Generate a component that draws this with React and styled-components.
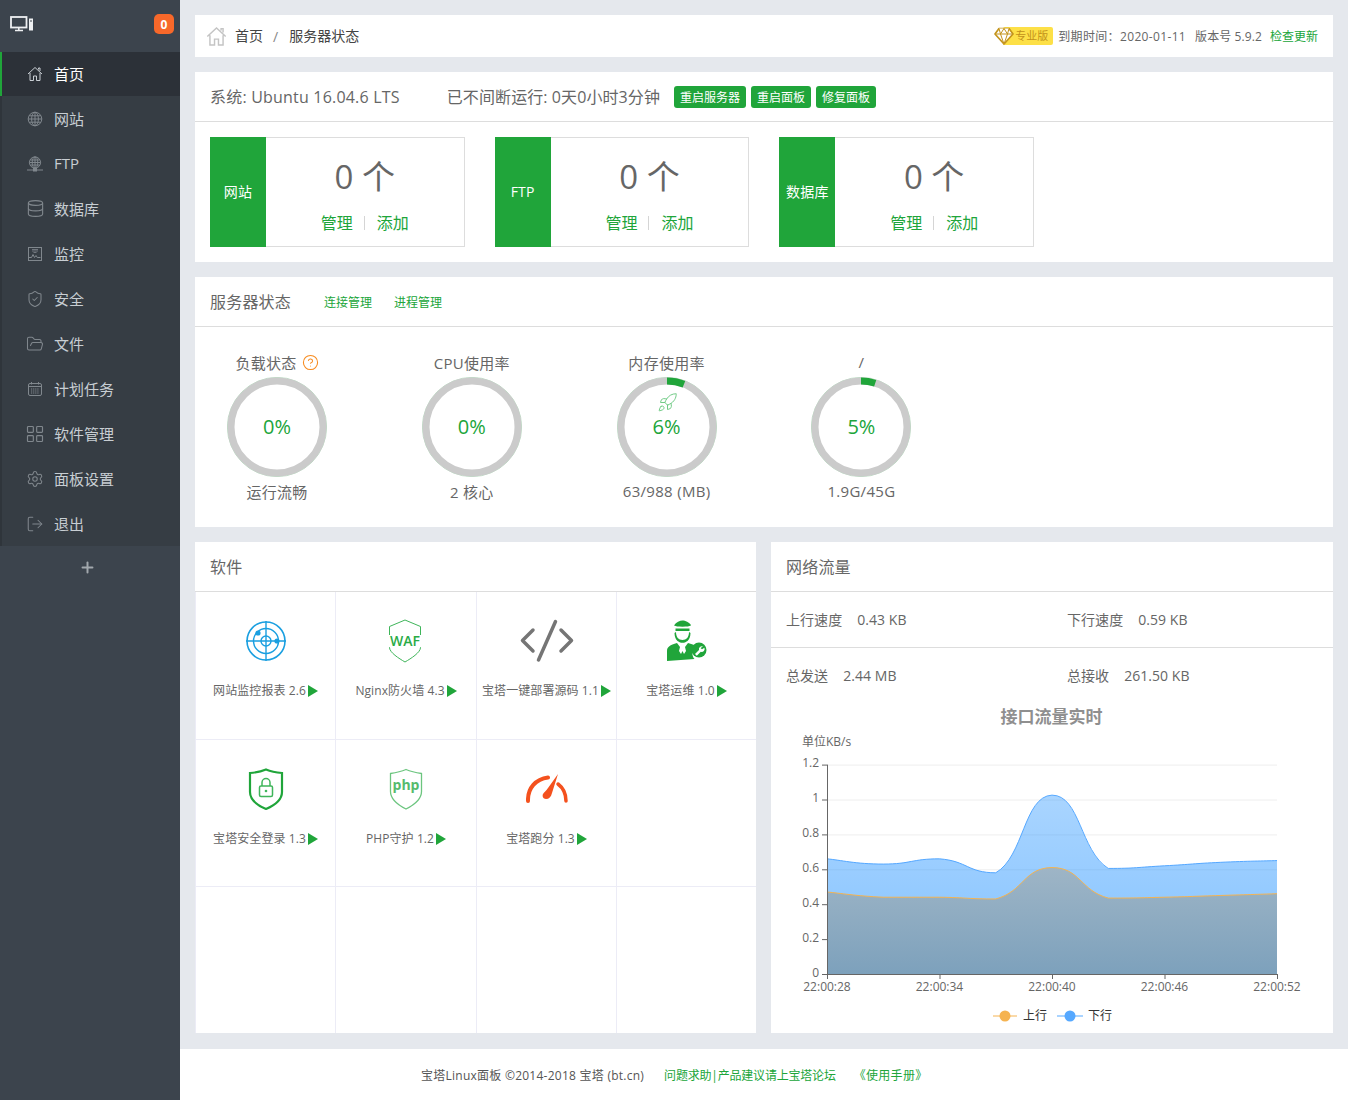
import React from "react";
import styled, { createGlobalStyle } from "styled-components";
import { Database, ShieldCheck, FolderOpen, LayoutGrid, Settings, LogOut, Plus, CircleHelp, Rocket } from "lucide-react";

const GREEN = "#20a53a";

const Global = createGlobalStyle`
  * { box-sizing: border-box; }
  html, body { margin: 0; padding: 0; }
  body {
    background: #e5e8ed;
    font-family: "Open Sans", "Noto Sans CJK SC", sans-serif;
    color: #666;
    font-size: 14px;
  }
`;

const Page = styled.div`
  display: flex;
  width: 100%;
  min-height: 1100px;
`;

const Sidebar = styled.aside`
  width: 180px;
  flex: none;
  background: #3c444d;
  display: flex;
  flex-direction: column;
`;
const Brand = styled.div`
  height: 52px;
  display: flex;
  align-items: center;
  justify-content: space-between;
  padding: 0 6px 4px 10px;
`;
const Badge = styled.span`
  width: 20px;
  height: 20px;
  border-radius: 5px;
  background: #f7682a;
  color: #fff;
  font-size: 12px;
  font-weight: 700;
  display: flex;
  align-items: center;
  justify-content: center;
`;
const Menu = styled.nav`
  background: #363d44;
  border-left: 2px solid #2f353b;
`;
const MenuItem = styled.a`
  height: 45px;
  display: flex;
  align-items: center;
  gap: 11px;
  margin-left: -2px;
  padding: 0 0 0 25px;
  font-size: 15px;
  color: ${p => (p.$active ? "#fff" : "#c8ced3")};
  background: ${p => (p.$active ? "#2c3138" : "transparent")};
  border-left: 2px solid ${p => (p.$active ? GREEN : "transparent")};
  & > span:last-child { margin-top: -1px; }
  &:first-child { height: 44px; }
  &:first-child > span:last-child { margin-top: -2px; }
`;
const MenuIcon = styled.span`
  width: 16px;
  height: 20px;
  flex: none;
  display: flex;
  align-items: center;
  justify-content: center;
  & > svg { flex: none; }
`;
const AddRow = styled.div`
  height: 44px;
  display: flex;
  align-items: center;
  justify-content: center;
  color: #a2a8ad;
  padding-bottom: 2px;
  & > svg { margin-left: -6px; }
`;

const Main = styled.main`
  flex: 1;
  min-width: 0;
  display: flex;
  flex-direction: column;
`;
const Content = styled.div`
  flex: 1;
  padding: 15px 15px 16px;
  display: flex;
  flex-direction: column;
  gap: 15px;
`;
const Card = styled.section`
  background: #fff;
`;
const Crumbs = styled(Card)`
  height: 42px;
  display: flex;
  align-items: center;
  padding: 0 15px 0 11px;
  color: #444;
  font-size: 14px;
`;
const CrumbText = styled.span`
  margin-top: -2px;
`;
const CrumbSep = styled.span`
  color: #888;
  margin: 0 11px 0 10px;
`;
const CrumbHome = styled.span`
  display: flex;
  margin-right: 8px;
`;
const CrumbMeta = styled.div`
  margin-left: auto;
  display: flex;
  align-items: center;
  font-size: 12px;
  color: #666;
`;
const ProTag = styled.span`
  background: #fde047;
  color: #c2911a;
  height: 18px;
  line-height: 18px;
  padding: 0 5px 0 12px;
  border-radius: 2px;
  margin-left: -11px;
  margin-right: 5px;
  font-size: 11px;
`;
const GemWrap = styled.span`
  display: flex;
  position: relative;
  z-index: 1;
`;
const MetaText = styled.span`
  margin-right: ${p => p.$mr || 0}px;
  letter-spacing: ${p => p.$ls || 0}px;
`;
const Link = styled.a`
  color: ${GREEN};
  font-size: ${p => p.$size || 12}px;
  margin-left: ${p => p.$ml || 0}px;
  letter-spacing: ${p => p.$ls || 0}px;
`;
const CardHead = styled.div`
  height: ${p => p.$h || 50}px;
  border-bottom: 1px solid #ddd;
  padding: 0 15px;
  display: flex;
  align-items: center;
  font-size: 16px;
  color: #666;
`;
const HeadText = styled.span`
  margin-top: -2px;
  letter-spacing: ${p => p.$ls ?? 0.2}px;
  margin-left: ${p => p.$ml || 0}px;
  margin-right: ${p => p.$mr || 0}px;
`;
const Btn = styled.button`
  height: 22px;
  padding: 0 6px;
  border: 0;
  border-radius: 3px;
  background: ${GREEN};
  color: #fff;
  font: inherit;
  font-size: 12px;
  margin-right: 5px;
`;
const Stats = styled.div`
  display: grid;
  grid-template-columns: repeat(3, 254.67px);
  column-gap: 30px;
  padding: 15px;
`;
const Stat = styled.div`
  height: 110px;
  display: flex;
  border: 1px solid #ddd;
`;
const StatLabel = styled.div`
  width: 56px;
  margin: -1px 0 -1px -1px;
  padding-bottom: 2px;
  background: ${GREEN};
  color: #fff;
  font-size: 14px;
  letter-spacing: 0.2px;
  display: flex;
  align-items: center;
  justify-content: center;
`;
const StatBody = styled.div`
  flex: 1;
  display: flex;
  flex-direction: column;
  align-items: center;
`;
const StatNum = styled.div`
  font-size: 33px;
  line-height: 44px;
  margin-top: 17px;
  color: #666;
`;
const StatLinks = styled.div`
  display: flex;
  align-items: center;
  margin-top: 13px;
  font-size: 16px;
  line-height: 22px;
`;
const StatSep = styled.i`
  width: 1px;
  height: 14px;
  background: #d5d5d5;
  margin: 0 12px 0 11px;
`;
const Gauges = styled.div`
  display: grid;
  grid-template-columns: repeat(4, 164px);
  column-gap: 30.8px;
  padding: 26px 0 25px;
  font-size: 15px;
  letter-spacing: 0.3px;
`;
const Gauge = styled.div`
  display: flex;
  flex-direction: column;
  align-items: center;
`;
const GaugeTitle = styled.div`
  height: 20px;
  padding-bottom: 2px;
  display: flex;
  align-items: center;
  gap: 5px;
  white-space: nowrap;
`;
const Ring = styled.div`
  position: relative;
  width: 100px;
  height: 100px;
  margin: 4px 0 5px;
`;
const Percent = styled.div`
  position: absolute;
  inset: 0;
  padding-bottom: 2px;
  display: flex;
  align-items: center;
  justify-content: center;
  font-size: 20px;
  letter-spacing: 0;
  color: ${GREEN};
`;
const RocketMark = styled.div`
  position: absolute;
  left: 40px;
  top: 15px;
  display: flex;
  color: #6cc982;
`;
const GaugeSub = styled.div`
  height: 20px;
  padding-bottom: 2px;
  display: flex;
  align-items: center;
`;
const Split = styled.div`
  display: grid;
  grid-template-columns: 561px 562px;
  column-gap: 15px;
  flex: 1;
`;
const SoftGrid = styled.div`
  display: grid;
  grid-template-columns: 140px 141px 140px 1fr;
  grid-template-rows: 148px 147px 146px;
  border-left: 1px solid #ececf6;
`;
const SoftCell = styled.div`
  border-right: 1px solid #ececf6;
  border-bottom: 1px solid #ececf6;
  padding-top: 25px;
  display: flex;
  flex-direction: column;
  align-items: center;
  &:nth-child(4n) { border-right: 0; }
  &:nth-last-child(-n + 4) { border-bottom: 0; }
`;
const SoftIcon = styled.div`
  width: 48px;
  height: 48px;
  display: flex;
  align-items: center;
  justify-content: center;
  & > svg { flex: none; }
`;
const SoftName = styled.div`
  margin-top: 17px;
  font-size: 12px;
  line-height: 18px;
  letter-spacing: 0.08px;
  color: #666;
  display: flex;
  align-items: center;
  white-space: nowrap;
  & > svg { margin-left: 2px; }
`;
const NetRow = styled.div`
  height: 56px;
  display: grid;
  grid-template-columns: 1fr 1fr;
  align-items: center;
  border-bottom: ${p => (p.$border ? "1px solid #ddd" : "0")};
`;
const NetCell = styled.div`
  display: flex;
  align-items: baseline;
  gap: 15px;
  padding-left: 15px;
  margin-top: -2px;
  color: #666;
  font-size: 14px;
  letter-spacing: 0.05px;
`;
const ChartBox = styled.div`
  display: flex;
  & > svg { display: block; }
`;
const Footer = styled.footer`
  height: 51px;
  background: #fff;
  display: flex;
  align-items: center;
  padding-left: 241px;
  font-size: 12px;
  color: #555;
`;
const FootText = styled.span`
  letter-spacing: 0.25px;
`;

/* ---------- sidebar icons ---------- */
const S = ({ children, size = 16 }) => (
  <svg width={size} height={size} viewBox="0 0 16 16" fill="none" stroke="#80878d" strokeWidth="1">{children}</svg>
);
const HomeIco = ({ c = "#c8ced3", size = 16, w = 1 }) => (
  <svg width={size} height={size} viewBox="0 0 16 16" fill="none" stroke={c} strokeWidth={w}>
    <path d="M1 8 8 1.500 15 8M3 7v7.500h3.500V10h3v4.500H13V7M11.500 3.500V2H13v3" />
  </svg>
);
const GlobeIco = () => (
  <S>
    <circle cx="8" cy="8" r="6.800" />
    <ellipse cx="8" cy="8" rx="3.400" ry="6.800" />
    <path d="M8 1.200v13.600M1.200 8h13.600M2.200 4.800h11.600M2.200 11.200h11.600" />
  </S>
);
const FtpIco = () => (
  <S>
    <circle cx="8" cy="6.500" r="5.600" />
    <ellipse cx="8" cy="6.500" rx="2.800" ry="5.600" />
    <path d="M8 1v11M2.400 6.500h11.200M3.200 4h9.600M3.200 9h9.600M0 14h16" />
    <rect x="6.500" y="12.400" width="3" height="2.600" fill="#80878d" />
  </S>
);
const MonitorIco = () => (
  <S>
    <rect x="1.500" y="1.500" width="13" height="13" />
    <path d="M1.500 11.500h3l1.500-3 1.500 3 1.500-2 1.300 2h3.200" />
    <path d="M5 3.500h6M5 5h6M6.500 6.500h3" strokeWidth=".8" />
  </S>
);
const CalIco = () => (
  <S>
    <rect x="1.500" y="2.500" width="13" height="12" rx="1.500" />
    <path d="M1.500 5.500h13M4.500 1v2.500M11.500 1v2.500" />
    <path d="M4 8h8M4 10h8M4 12h8" strokeDasharray="1.200 .9" />
  </S>
);
const lu = { color: "#80878d", strokeWidth: 1.4 };
const Triangle = () => (
  <svg width="10" height="12" viewBox="0 0 10 12"><path d="M0 0v12l10-6z" fill={GREEN} /></svg>
);

const menu = [
  ["首页", <HomeIco size={16} />],
  ["网站", <GlobeIco />],
  ["FTP", <FtpIco />],
  ["数据库", <Database size={19} {...lu} />],
  ["监控", <MonitorIco />],
  ["安全", <ShieldCheck size={18} {...lu} />],
  ["文件", <FolderOpen size={18} {...lu} />],
  ["计划任务", <CalIco />],
  ["软件管理", <LayoutGrid size={20} {...lu} />],
  ["面板设置", <Settings size={18} {...lu} />],
  ["退出", <LogOut size={18} {...lu} />],
];

/* ---------- software icons ---------- */
const Radar = () => (
  <svg width="40" height="40" viewBox="0 0 40 40" fill="none" stroke="#1a9fe0">
    <circle cx="20" cy="20" r="19" strokeWidth="1.600" />
    <circle cx="20" cy="20" r="12.500" strokeWidth="1.400" />
    <circle cx="20" cy="20" r="5" strokeWidth="1.400" />
    <path d="M20 0v40M0 20h40" strokeWidth="1.400" />
    <circle cx="12" cy="12" r="2.600" fill="#1a9fe0" stroke="none" />
    <circle cx="31" cy="20" r="2.600" fill="#1a9fe0" stroke="none" />
  </svg>
);
const Waf = () => (
  <svg width="36" height="44" viewBox="0 0 36 44" fill="none">
    <path d="M17 1 32.500 7.500v21c0 5-9.500 11-15.500 14.500C11 39.500 1.500 33.500 1.500 28.500v-21z" stroke="#3fb55a" strokeWidth="1" />
    <rect x="0" y="16" width="36" height="12" fill="#fff" />
    <text x="17" y="27" textAnchor="middle" fontSize="14" fontFamily="'Open Sans',sans-serif" fontWeight="600" fill="#2aab46">WAF</text>
  </svg>
);
const Code = () => (
  <svg width="54" height="44" viewBox="0 0 54 44" fill="none" stroke="#757575" strokeWidth="3.500" strokeLinecap="round" strokeLinejoin="round">
    <path d="M13 11 2.500 21.500 13 32M41 11l10.500 10.500L41 32M35.500 2.500 18.500 41" />
  </svg>
);
const Ops = () => (
  <svg width="40" height="42" viewBox="0 0 40 42">
    <g fill={GREEN}>
      <path d="M7 5.500C9 2 13 .5 15.500.5s7 1.500 8.500 5c-2 .8-4 1.200-8.500 1.200S9 6.300 7 5.500z" />
      <path d="M8.500 8.500h14v2.500h-14z" />
      <path d="M9 12c0 5 2.500 8 6.500 8s6.500-3 6.500-8l1.500 1c0 4-1.500 6.500-3 8 -1 .8 -3 1.800 -5 1.800s-4-1-5-1.800c-1.500-1.500-3-4-3-8z" />
      <path d="M0 41V31c0-4 3-6 10-8l3 4 -1 4 2 3 1.500-3 1.500 3 2-3-1-4 3-4 4 1.300c2 .8 3 1.400 4 2.700-3 2-4 5-3.500 8 .3 1.500 1 3 2 4z" />
      <circle cx="32" cy="30" r="7.500" />
    </g>
    <path d="M36 26.500a3 3 0 0 0-4 3.500l-4 4 1.800 1.800 4-4a3 3 0 0 0 3.600-4L35 29.300l-1.500-1.300z" fill="#fff" />
  </svg>
);
const LockShield = () => (
  <svg width="36" height="42" viewBox="0 0 36 42" fill="none">
    <path d="M18 1.500C24 4 28 4.500 34 5v19c0 8-9 14-16 17C11 38 2 32 2 24V5c6-.5 10-1 16-3.500z" stroke={GREEN} strokeWidth="2.200" />
    <rect x="11.500" y="18" width="13" height="10.500" rx="1.500" stroke="#3fb55a" strokeWidth="1.500" />
    <path d="M14 18v-3.500a4 4 0 0 1 8 0V18" stroke="#3fb55a" strokeWidth="1.500" />
    <circle cx="18" cy="23" r="1.300" fill="#3fb55a" />
  </svg>
);
const PhpShield = () => (
  <svg width="36" height="42" viewBox="0 0 36 42" fill="none">
    <path d="M18 1.500C24 4 27 4.500 33.500 5.500v18c0 8-8.500 14-15.500 17.500C11 37.500 2.500 31.500 2.500 23.500v-18C9 4.500 12 4 18 1.500z" stroke="#6cc57f" strokeWidth="1.300" />
    <text x="18" y="22" textAnchor="middle" fontSize="14" fontWeight="700" fontFamily="'Open Sans',sans-serif" fill="#55bb6c">php</text>
  </svg>
);
const Speed = () => (
  <svg width="42" height="30" viewBox="0 0 42 30" fill="none">
    <path d="M2 27C1.500 14 10 5 22 3.500" stroke="#f4511e" strokeWidth="4" strokeLinecap="round" />
    <path d="M32 10c4 3 8 9 8 17" stroke="#f4511e" strokeWidth="3.500" strokeLinecap="round" />
    <path d="M32 0 26 19c-1 4-3 6-6 6s-4-3-3-5 3-3 5-6z" fill="#f4511e" />
  </svg>
);

const soft = [
  ["网站监控报表 2.6", <Radar />],
  ["Nginx防火墙 4.3", <Waf />],
  ["宝塔一键部署源码 1.1", <Code />],
  ["宝塔运维 1.0", <Ops />],
  ["宝塔安全登录 1.3", <LockShield />],
  ["PHP守护 1.2", <PhpShield />],
  ["宝塔跑分 1.3", <Speed />],
  null, null, null, null, null,
];

/* ---------- gauge ---------- */
const RingSvg = ({ pct }) => {
  const r = 46;
  const c = 2 * Math.PI * r;
  return (
    <svg width="100" height="100" viewBox="0 0 100 100" fill="none">
      <circle cx="50" cy="50" r="49.600" stroke="#a9d6b4" strokeWidth=".8" />
      <circle cx="50" cy="50" r={r} stroke="#cbcbcb" strokeWidth="7" />
      {pct > 0 && (
        <circle cx="50" cy="50" r={r} stroke={GREEN} strokeWidth="7"
          strokeDasharray={`${(c * pct) / 100} ${c}`} transform="rotate(-90 50 50)" />
      )}
    </svg>
  );
};

/* ---------- chart ---------- */
const X0 = 827, X1 = 1277, Y0 = 974, K = 174.5;
const px = i => X0 + (i * (X1 - X0)) / 8;
const py = v => Y0 - v * K;
const clamp = (v, a, b) => Math.min(Math.max(a, b), Math.max(Math.min(a, b), v));
const smooth = vals => {
  const p = vals.map((v, i) => [px(i), py(v)]);
  let d = `M${p[0][0]} ${p[0][1]}`;
  for (let i = 0; i < p.length - 1; i++) {
    const a = p[i - 1] || p[i], b = p[i], c = p[i + 1], e = p[i + 2] || c;
    const c1 = [b[0] + (c[0] - a[0]) * 0.25, clamp(b[1] + (c[1] - a[1]) * 0.25, b[1], c[1])];
    const c2 = [c[0] - (e[0] - b[0]) * 0.25, clamp(c[1] - (e[1] - b[1]) * 0.25, b[1], c[1])];
    d += `C${c1[0]} ${c1[1]} ${c2[0]} ${c2[1]} ${c[0]} ${c[1]}`;
  }
  return d;
};
const down = [0.66, 0.63, 0.66, 0.58, 1.025, 0.605, 0.62, 0.64, 0.65];
const up = [0.47, 0.44, 0.44, 0.43, 0.61, 0.435, 0.44, 0.45, 0.46];
const closed = d => `${d}L${X1} ${Y0}L${X0} ${Y0}Z`;
const chartFont = "'Open Sans','Noto Sans CJK SC',sans-serif";

const Chart = () => (
  <svg width="562" height="329" viewBox="771 704 562 329" fontFamily={chartFont} fontSize="12" fill="#666">
    <defs>
      <linearGradient id="gd" x1="0" y1="0" x2="0" y2="1">
        <stop offset="0" stopColor="#1e90ff" stopOpacity=".38" />
        <stop offset="1" stopColor="#1e90ff" stopOpacity=".55" />
      </linearGradient>
      <linearGradient id="gu" x1="0" y1="0" x2="0" y2="1">
        <stop offset="0" stopColor="#9eb5c6" />
        <stop offset="1" stopColor="#7da1bc" />
      </linearGradient>
    </defs>
    <text x="1051.500" y="723" textAnchor="middle" fontSize="17" fontWeight="700" fill="#8f8f8f">接口流量实时</text>
    <text x="802" y="746">单位KB/s</text>
    {[0.2, 0.4, 0.6, 0.8, 1, 1.2].map(v => (
      <line key={v} x1={X0} x2={X1} y1={py(v) + 0.5} y2={py(v) + 0.5} stroke="#eee" />
    ))}
    <path d={closed(smooth(down))} fill="url(#gd)" />
    <path d={closed(smooth(up))} fill="url(#gu)" />
    <path d={smooth(down)} fill="none" stroke="#55a8ff" strokeWidth="1" />
    <path d={smooth(up)} fill="none" stroke="#f5b350" strokeWidth="1" />
    <path d={`M${X0 - 5} ${Y0 + 0.5}H${X1 + 0.5}V${Y0 + 5}M${X0 + 0.5} ${py(1.2)}V${Y0 + 5}`} fill="none" stroke="#666" />
    {[0, 0.2, 0.4, 0.6, 0.8, 1, 1.2].map(v => (
      <g key={v}>
        <line x1={X0 - 5} x2={X0} y1={py(v) + 0.5} y2={py(v) + 0.5} stroke="#666" />
        <text x={X0 - 8} y={py(v) + 2.5} textAnchor="end">{v}</text>
      </g>
    ))}
    {["22:00:28", "22:00:34", "22:00:40", "22:00:46", "22:00:52"].map((t, i) => {
      const x = X0 + i * 112.5;
      return (
        <g key={t}>
          <line x1={x + 0.5} x2={x + 0.5} y1={Y0} y2={Y0 + 5} stroke="#666" />
          <text x={x} y={991} textAnchor="middle">{t}</text>
        </g>
      );
    })}
    <line x1="993" x2="1017" y1="1016" y2="1016" stroke="#f5b350" />
    <circle cx="1005" cy="1016" r="5.500" fill="#f5b350" />
    <text x="1023" y="1020" fill="#333">上行</text>
    <line x1="1057" x2="1083" y1="1016" y2="1016" stroke="#55a8ff" />
    <circle cx="1070" cy="1016" r="5.500" fill="#55a8ff" />
    <text x="1088" y="1020" fill="#333">下行</text>
  </svg>
);

const Gem = () => (
  <svg width="20" height="20" viewBox="0 0 20 20" fill="#fff" stroke="#c4941c" strokeWidth="1.700" strokeLinejoin="round">
    <path d="M5 2.500h10l4 5.500-9 10L1 8z" />
    <path d="M1 8h18M6.500 8 10 18l3.500-10M5 2.500 6.500 8 10 2.500 13.500 8 15 2.500" strokeWidth="1" />
  </svg>
);
const TopIcon = () => (
  <svg width="24" height="16" viewBox="0 0 24 16" fill="none" stroke="#eef0f2">
    <rect x="1" y="1" width="15.500" height="10.500" strokeWidth="1.800" />
    <path d="M5 14.500h8M8.800 11.500v3" strokeWidth="1.500" />
    <rect x="19" y="2.500" width="4" height="12" fill="#eef0f2" stroke="none" />
    <path d="M20 5h2" stroke="#3c444d" />
  </svg>
);

const StatBox = ({ label }) => (
  <Stat>
    <StatLabel>{label}</StatLabel>
    <StatBody>
      <StatNum>0 个</StatNum>
      <StatLinks>
        <Link $size={16}>管理</Link>
        <StatSep />
        <Link $size={16}>添加</Link>
      </StatLinks>
    </StatBody>
  </Stat>
);

export default function App() {
  return (
    <Page>
      <Global />
      <Sidebar>
        <Brand>
          <TopIcon />
          <Badge>0</Badge>
        </Brand>
        <Menu>
          {menu.map(([t, icon], i) => (
            <MenuItem key={t} $active={i === 0}><MenuIcon>{icon}</MenuIcon><span>{t}</span></MenuItem>
          ))}
        </Menu>
        <AddRow><Plus size={17} strokeWidth={2.8} /></AddRow>
      </Sidebar>
      <Main>
        <Content>
          <Crumbs>
            <CrumbHome><HomeIco c="#c4c4c4" size={21} w={1.1} /></CrumbHome>
            <CrumbText>首页</CrumbText>
            <CrumbSep>/</CrumbSep>
            <CrumbText>服务器状态</CrumbText>
            <CrumbMeta>
              <GemWrap><Gem /></GemWrap>
              <ProTag>专业版</ProTag>
              <MetaText $mr={9} $ls={0.35}>到期时间：2020-01-11</MetaText>
              <MetaText $ls={0.1}>版本号 5.9.2</MetaText>
              <Link $ml={8}>检查更新</Link>
            </CrumbMeta>
          </Crumbs>
          <Card>
            <CardHead>
              <HeadText>系统: Ubuntu 16.04.6 LTS</HeadText>
              <HeadText $ml={47} $mr={14} $ls={0.09}>已不间断运行: 0天0小时3分钟</HeadText>
              <Btn>重启服务器</Btn>
              <Btn>重启面板</Btn>
              <Btn>修复面板</Btn>
            </CardHead>
            <Stats>
              <StatBox label="网站" />
              <StatBox label="FTP" />
              <StatBox label="数据库" />
            </Stats>
          </Card>
          <Card>
            <CardHead>
              <HeadText>服务器状态</HeadText>
              <Link $ml={33}>连接管理</Link>
              <Link $ml={22}>进程管理</Link>
            </CardHead>
            <Gauges>
              <Gauge>
                <GaugeTitle>负载状态<CircleHelp size={17} color="#f78b1f" strokeWidth={1.5} /></GaugeTitle>
                <Ring><RingSvg pct={0} /><Percent>0%</Percent></Ring>
                <GaugeSub>运行流畅</GaugeSub>
              </Gauge>
              <Gauge>
                <GaugeTitle>CPU使用率</GaugeTitle>
                <Ring><RingSvg pct={0} /><Percent>0%</Percent></Ring>
                <GaugeSub>2 核心</GaugeSub>
              </Gauge>
              <Gauge>
                <GaugeTitle>内存使用率</GaugeTitle>
                <Ring>
                  <RingSvg pct={6} />
                  <RocketMark><Rocket size={21} strokeWidth={1.1} /></RocketMark>
                  <Percent>6%</Percent>
                </Ring>
                <GaugeSub>63/988 (MB)</GaugeSub>
              </Gauge>
              <Gauge>
                <GaugeTitle>/</GaugeTitle>
                <Ring><RingSvg pct={5} /><Percent>5%</Percent></Ring>
                <GaugeSub>1.9G/45G</GaugeSub>
              </Gauge>
            </Gauges>
          </Card>
          <Split>
            <Card>
              <CardHead><HeadText>软件</HeadText></CardHead>
              <SoftGrid>
                {soft.map((s, i) => (
                  <SoftCell key={i}>
                    {s && <SoftIcon>{s[1]}</SoftIcon>}
                    {s && <SoftName>{s[0]}<Triangle /></SoftName>}
                  </SoftCell>
                ))}
              </SoftGrid>
            </Card>
            <Card>
              <CardHead><HeadText>网络流量</HeadText></CardHead>
              <NetRow $border>
                <NetCell><span>上行速度</span><span>0.43 KB</span></NetCell>
                <NetCell><span>下行速度</span><span>0.59 KB</span></NetCell>
              </NetRow>
              <NetRow>
                <NetCell><span>总发送</span><span>2.44 MB</span></NetCell>
                <NetCell><span>总接收</span><span>261.50 KB</span></NetCell>
              </NetRow>
              <ChartBox><Chart /></ChartBox>
            </Card>
          </Split>
        </Content>
        <Footer>
          <FootText>宝塔Linux面板 ©2014-2018 宝塔 (bt.cn)</FootText>
          <Link $ml={20} $ls={-0.2}>问题求助|产品建议请上宝塔论坛</Link>
          <Link $ml={18} $ls={0.3}>《使用手册》</Link>
        </Footer>
      </Main>
    </Page>
  );
}
